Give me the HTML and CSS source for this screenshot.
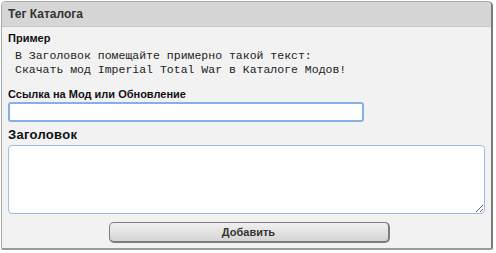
FILE: index.html
```html
<!DOCTYPE html>
<html lang="ru">
<head>
    <meta charset="UTF-8">
    <title>Тег Каталога</title>
    <link rel="stylesheet" href="styles.css">
</head>
<body>
    <div class="dialog">
        <div class="dialog-title">Тег Каталога</div>
        <form class="dialog-body">
            <div class="example-title">Пример</div>
            <pre class="example-text">В Заголовок помещайте примерно такой текст:
Скачать мод Imperial Total War в Каталоге Модов!</pre>
            <label class="small-label" for="link">Ссылка на Мод или Обновление</label>
            <input type="text" id="link" class="link-input">
            <label class="big-label" for="title">Заголовок</label>
            <textarea id="title" class="title-area"></textarea>
            <div class="actions">
                <button type="button">Добавить</button>
            </div>
        </form>
    </div>
</body>
</html>
```

FILE: styles.css
```css
body {
    margin: 0;
    background: #ffffff;
    font-family: "Liberation Sans", Arial, sans-serif;
}
.dialog {
    margin: 1px 0 0 1px;
    width: 492px;
    height: 249px;
    box-sizing: border-box;
    border: 1px solid #a9a9a9;
    border-right: 2px solid #7a7a7a;
    border-bottom: 2px solid #9a9a9a;
    border-radius: 5px 5px 2px 2px;
    background: #f2f2f2;
    overflow: hidden;
}
.dialog-title {
    height: 24px;
    line-height: 25px;
    padding-left: 6px;
    background: #d6d6d6;
    border-bottom: 1px solid #c8c8c8;
    font-size: 12px;
    font-weight: bold;
    color: #333;
}
.dialog-body {
    display: flex;
    flex-direction: column;
    padding: 4px 6px 0 6px;
}
.example-title {
    font-size: 11px;
    font-weight: bold;
    color: #111;
    line-height: 14px;
    height: 14px;
}
.example-text {
    display: block;
    margin: 4px 0 0 7px;
    height: 28px;
    font-family: "Liberation Mono", "Courier New", monospace;
    font-size: 11.5px;
    line-height: 14px;
    color: #222;
    overflow: hidden;
}
.small-label {
    margin-top: 11px;
    height: 13px;
    font-size: 11px;
    font-weight: bold;
    color: #111;
    line-height: 13px;
}
.link-input {
    margin-top: 1px;
    width: 356px;
    height: 20px;
    box-sizing: border-box;
    border: 2px solid #86aee8;
    border-radius: 3px;
    background: #fff;
    outline: none;
}
.big-label {
    margin-top: 5px;
    height: 15px;
    font-size: 13px;
    font-weight: bold;
    letter-spacing: 0.3px;
    color: #111;
    line-height: 15px;
}
.title-area {
    margin-top: 3px;
    width: 477px;
    height: 69px;
    box-sizing: border-box;
    border: 1px solid #9dbce6;
    border-radius: 4px;
    background: #fff;
    resize: both;
}
.actions {
    display: flex;
    justify-content: center;
    margin-top: 8px;
    padding-left: 5px;
}
.actions button {
    width: 281px;
    height: 21px;
    border: 1px solid #7d7d7d;
    border-right-width: 2px;
    border-bottom-width: 2px;
    border-radius: 5px;
    background: linear-gradient(#f0f0f0, #d4d4d4);
    font-family: "Liberation Sans", Arial, sans-serif;
    font-size: 11px;
    font-weight: bold;
    color: #333;
    cursor: pointer;
}
```
